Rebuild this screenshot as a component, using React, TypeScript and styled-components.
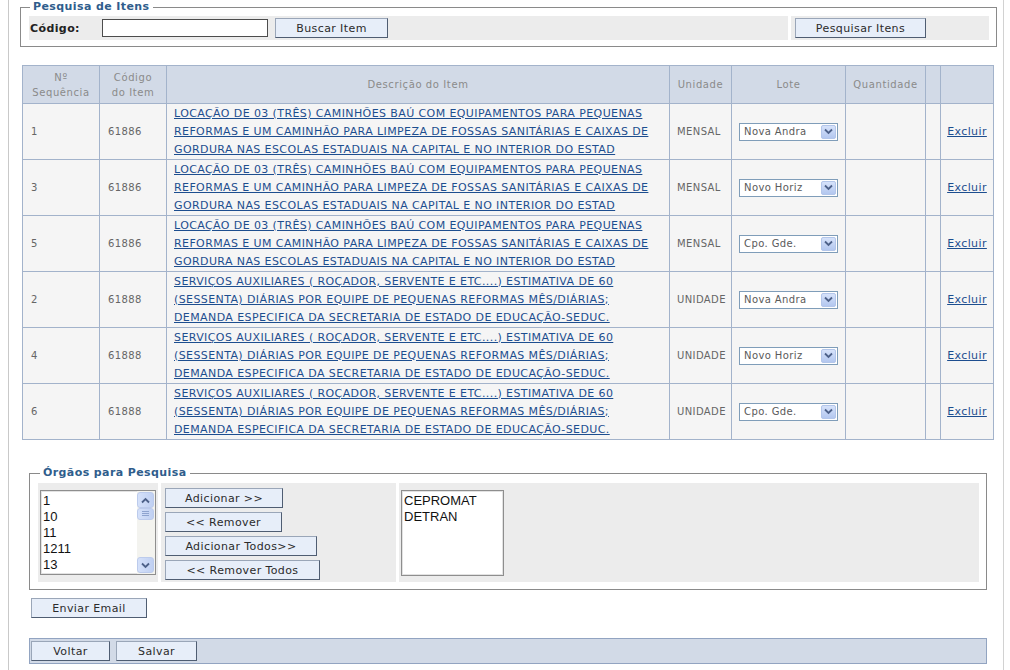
import React from "react";
import styled, { createGlobalStyle } from "styled-components";

const GlobalStyle = createGlobalStyle`
  html, body { margin: 0; padding: 0; background: #fff; }
  body {
    font-family: "DejaVu Sans", Verdana, sans-serif;
    font-size: 11px;
    letter-spacing: 0.4px;
    color: #333;
  }
`;

const Frame = styled.div`
  margin-left: 8px;
  width: 996px;
  min-height: 670px;
  box-sizing: border-box;
  border-left: 1px solid #c9c9c9;
  border-right: 1px solid #d2d2d2;
  overflow: hidden;
`;

const Fieldset = styled.fieldset<{ $top: number; $left: number; $width: number; $padTop: number; $padBottom: number }>`
  margin: ${(p) => p.$top}px 0 0 ${(p) => p.$left}px;
  width: ${(p) => p.$width}px;
  box-sizing: border-box;
  border: 1px solid #8a8a8a;
  padding: ${(p) => p.$padTop}px 7px ${(p) => p.$padBottom}px 8px;
  min-inline-size: 0;
`;

const Legend = styled.legend<{ $shift: number }>`
  margin-left: ${(p) => p.$shift}px;
  padding: 0 3px;
  font-weight: bold;
  font-size: 11px;
  line-height: 14px;
  color: #2f5d8c;
`;

const FormRow = styled.div`
  display: flex;
  gap: 3px;
  height: 24px;
`;

const FormCell = styled.div<{ $width?: number }>`
  display: flex;
  align-items: center;
  background: #ececec;
  ${(p) => (p.$width ? `width: ${p.$width}px; flex: none;` : "flex: 1;")}
`;

const FieldLabel = styled.label`
  width: 72px;
  padding-left: 1px;
  font-weight: bold;
  color: #222;
`;

const TextInput = styled.input`
  width: 166px;
  height: 18px;
  box-sizing: border-box;
  border: 1px solid #4d4d4d;
  padding: 0 3px;
  font: 11px "DejaVu Sans", Verdana, sans-serif;
  background: #fff;
`;

const Button = styled.button<{ $w: number; $gap?: number }>`
  width: ${(p) => p.$w}px;
  height: 20px;
  margin-left: ${(p) => p.$gap ?? 0}px;
  box-sizing: border-box;
  padding: 0;
  border: 1px solid #9aa6b8;
  border-right-color: #4f5d72;
  border-bottom-color: #4f5d72;
  background: #e7eef9;
  color: #2b2b2b;
  font: 11px "DejaVu Sans", Verdana, sans-serif;
  letter-spacing: 0.4px;
  flex: none;
  cursor: pointer;
`;

const ItemsTable = styled.table`
  margin: 18px 0 0 13px;
  width: 972px;
  border-collapse: collapse;
  table-layout: fixed;
`;

const HeadCell = styled.th`
  height: 37px;
  padding: 0 4px;
  border: 1px solid #a3b3cb;
  background: #d2dae7;
  color: #8a8a8a;
  font-size: 10px;
  letter-spacing: 0.6px;
  font-weight: normal;
  line-height: 15px;
  text-align: center;
  vertical-align: middle;
`;

const Cell = styled.td<{ $pad?: number; $center?: boolean }>`
  height: 55px;
  padding: 0 0 0 ${(p) => p.$pad ?? 8}px;
  border: 1px solid #a3b3cb;
  background: #f5f5f5;
  color: #666;
  font-size: 10px;
  line-height: 18px;
  vertical-align: middle;
  text-align: ${(p) => (p.$center ? "center" : "left")};
  overflow: hidden;
`;

const DescLink = styled.a`
  display: block;
  color: #1d4e8f;
  font-size: 11px;
  line-height: 18px;
  text-decoration: underline;
  cursor: pointer;
`;

const DescLine = styled.span`
  display: block;
  white-space: nowrap;
`;

const DeleteLink = styled.a`
  color: #1d4e8f;
  font-size: 11px;
  text-decoration: underline;
  cursor: pointer;
`;

const SelectBox = styled.div`
  display: flex;
  align-items: center;
  justify-content: space-between;
  width: 99px;
  height: 18px;
  box-sizing: border-box;
  border: 1px solid #7f9db9;
  background: #fff;
  padding-left: 4px;
  color: #5a5a5a;
  font-size: 10px;
  line-height: 16px;
`;

const ArrowButton = styled.span`
  display: flex;
  align-items: center;
  justify-content: center;
  width: 15px;
  height: 14px;
  margin-right: 1px;
  box-sizing: border-box;
  border: 1px solid #b3c6ea;
  border-radius: 2px;
  background: linear-gradient(#d6e2fa, #b3c7ef);
`;

const PanelRow = styled.div`
  display: flex;
  gap: 3px;
  height: 99px;
`;

const PanelCell = styled.div<{ $width?: number; $pad: string }>`
  background: #ececec;
  padding: ${(p) => p.$pad};
  box-sizing: border-box;
  ${(p) => (p.$width ? `width: ${p.$width}px; flex: none;` : "flex: 1;")}
`;

const ButtonStack = styled.div`
  display: flex;
  flex-direction: column;
  align-items: flex-start;
  gap: 4px;
`;

const ListBox = styled.div<{ $w: number; $h: number }>`
  display: flex;
  width: ${(p) => p.$w}px;
  height: ${(p) => p.$h}px;
  box-sizing: border-box;
  border: 1px solid #8e8e8e;
  box-shadow: inset 0 0 0 1px #e2e2e2;
  background: #fff;
  overflow: hidden;
`;

const ListItems = styled.div`
  flex: 1;
  padding: 2px 0 0 2px;
  font-family: "Liberation Sans", Arial, sans-serif;
  font-size: 13px;
  letter-spacing: 0;
  line-height: 16px;
  color: #111;
`;

const ScrollBar = styled.div`
  display: flex;
  flex-direction: column;
  width: 17px;
  padding: 1px 1px 1px 0;
  background: #f3f3ef;
`;

const ScrollButton = styled.div<{ $h: number }>`
  display: flex;
  align-items: center;
  justify-content: center;
  height: ${(p) => p.$h}px;
  box-sizing: border-box;
  border: 1px solid #bccbec;
  border-radius: 3px;
  background: linear-gradient(90deg, #d5e1fa, #c0d0f2);
`;

const ScrollSpace = styled.div`
  flex: 1;
`;

const EmailRow = styled.div`
  margin: 8px 0 0 22px;
`;

const ActionBar = styled.div`
  display: flex;
  align-items: center;
  margin: 20px 0 0 20px;
  width: 958px;
  height: 26px;
  box-sizing: border-box;
  padding-left: 1px;
  border: 1px solid #92a4c1;
  background: #d2dae7;
`;

const Chevron = ({ up = false }: { up?: boolean }) => (
  <svg width="9" height="7" viewBox="0 0 9 7">
    <path
      d={up ? "M1 5.5 L4.5 2 L8 5.5" : "M1 1.5 L4.5 5 L8 1.5"}
      fill="none"
      stroke="#4d6189"
      strokeWidth="1.8"
    />
  </svg>
);

const Grip = () => (
  <svg width="9" height="6" viewBox="0 0 9 6">
    <path d="M1 0.5H8M1 2.5H8M1 4.5H8" stroke="#8ea3cf" strokeWidth="1" />
  </svg>
);

const LOCACAO = [
  "LOCAÇÃO DE 03 (TRÊS) CAMINHÕES BAÚ COM EQUIPAMENTOS PARA PEQUENAS",
  "REFORMAS E UM CAMINHÃO PARA LIMPEZA DE FOSSAS SANITÁRIAS E CAIXAS DE",
  "GORDURA NAS ESCOLAS ESTADUAIS NA CAPITAL E NO INTERIOR DO ESTAD",
];

const SERVICOS = [
  "SERVIÇOS AUXILIARES ( ROÇADOR, SERVENTE E ETC....) ESTIMATIVA DE 60",
  "(SESSENTA) DIÁRIAS POR EQUIPE DE PEQUENAS REFORMAS MÊS/DIÁRIAS;",
  "DEMANDA ESPECIFICA DA SECRETARIA DE ESTADO DE EDUCAÇÃO-SEDUC.",
];

const items = [
  { seq: 1, code: "61886", desc: LOCACAO, unit: "MENSAL", lote: "Nova Andra" },
  { seq: 3, code: "61886", desc: LOCACAO, unit: "MENSAL", lote: "Novo Horiz" },
  { seq: 5, code: "61886", desc: LOCACAO, unit: "MENSAL", lote: "Cpo. Gde." },
  { seq: 2, code: "61888", desc: SERVICOS, unit: "UNIDADE", lote: "Nova Andra" },
  { seq: 4, code: "61888", desc: SERVICOS, unit: "UNIDADE", lote: "Novo Horiz" },
  { seq: 6, code: "61888", desc: SERVICOS, unit: "UNIDADE", lote: "Cpo. Gde." },
];

const columns = [77, 67, 503, 62, 114, 80, 15, 53];

const orgaosDisponiveis = ["1", "10", "11", "1211", "13"];
const orgaosSelecionados = ["CEPROMAT", "DETRAN"];

export default function App() {
  return (
    <>
      <GlobalStyle />
      <Frame>
        <Fieldset $top={0} $left={11} $width={977} $padTop={2} $padBottom={6}>
          <Legend $shift={1}>Pesquisa de Itens</Legend>
          <FormRow>
            <FormCell $width={759}>
              <FieldLabel>Código:</FieldLabel>
              <TextInput type="text" />
              <Button $w={113} $gap={7}>Buscar Item</Button>
            </FormCell>
            <FormCell>
              <Button $w={131} $gap={4}>Pesquisar Itens</Button>
            </FormCell>
          </FormRow>
        </Fieldset>

        <ItemsTable>
          <colgroup>
            {columns.map((w, i) => (
              <col key={i} style={{ width: w }} />
            ))}
          </colgroup>
          <thead>
            <tr>
              <HeadCell>
                Nº
                <br />
                Sequência
              </HeadCell>
              <HeadCell>
                Código
                <br />
                do Item
              </HeadCell>
              <HeadCell>Descrição do Item</HeadCell>
              <HeadCell>Unidade</HeadCell>
              <HeadCell>Lote</HeadCell>
              <HeadCell>Quantidade</HeadCell>
              <HeadCell />
              <HeadCell />
            </tr>
          </thead>
          <tbody>
            {items.map((it, i) => (
              <tr key={i}>
                <Cell>{it.seq}</Cell>
                <Cell>{it.code}</Cell>
                <Cell $pad={7}>
                  <DescLink>
                    {it.desc.map((line) => (
                      <DescLine key={line}>{line}</DescLine>
                    ))}
                  </DescLink>
                </Cell>
                <Cell $pad={7}>{it.unit}</Cell>
                <Cell $pad={7}>
                  <SelectBox>
                    {it.lote}
                    <ArrowButton>
                      <Chevron />
                    </ArrowButton>
                  </SelectBox>
                </Cell>
                <Cell />
                <Cell />
                <Cell $pad={0} $center>
                  <DeleteLink>Excluir</DeleteLink>
                </Cell>
              </tr>
            ))}
          </tbody>
        </ItemsTable>

        <Fieldset $top={26} $left={20} $width={958} $padTop={3} $padBottom={7}>
          <Legend $shift={2}>Órgãos para Pesquisa</Legend>
          <PanelRow>
            <PanelCell $width={120} $pad="7px 0 0 2px">
              <ListBox $w={116} $h={85}>
                <ListItems>
                  {orgaosDisponiveis.map((o) => (
                    <div key={o}>{o}</div>
                  ))}
                </ListItems>
                <ScrollBar>
                  <ScrollButton $h={16}>
                    <Chevron up />
                  </ScrollButton>
                  <ScrollButton $h={12}>
                    <Grip />
                  </ScrollButton>
                  <ScrollSpace />
                  <ScrollButton $h={16}>
                    <Chevron />
                  </ScrollButton>
                </ScrollBar>
              </ListBox>
            </PanelCell>
            <PanelCell $width={235} $pad="5px 0 0 4px">
              <ButtonStack>
                <Button $w={118}>Adicionar &gt;&gt;</Button>
                <Button $w={117}>&lt;&lt; Remover</Button>
                <Button $w={152}>Adicionar Todos&gt;&gt;</Button>
                <Button $w={155}>&lt;&lt; Remover Todos</Button>
              </ButtonStack>
            </PanelCell>
            <PanelCell $pad="7px 0 0 2px">
              <ListBox $w={103} $h={86}>
                <ListItems>
                  {orgaosSelecionados.map((o) => (
                    <div key={o}>{o}</div>
                  ))}
                </ListItems>
              </ListBox>
            </PanelCell>
          </PanelRow>
        </Fieldset>

        <EmailRow>
          <Button $w={116}>Enviar Email</Button>
        </EmailRow>

        <ActionBar>
          <Button $w={79}>Voltar</Button>
          <Button $w={81} $gap={6}>
            Salvar
          </Button>
        </ActionBar>
      </Frame>
    </>
  );
}
